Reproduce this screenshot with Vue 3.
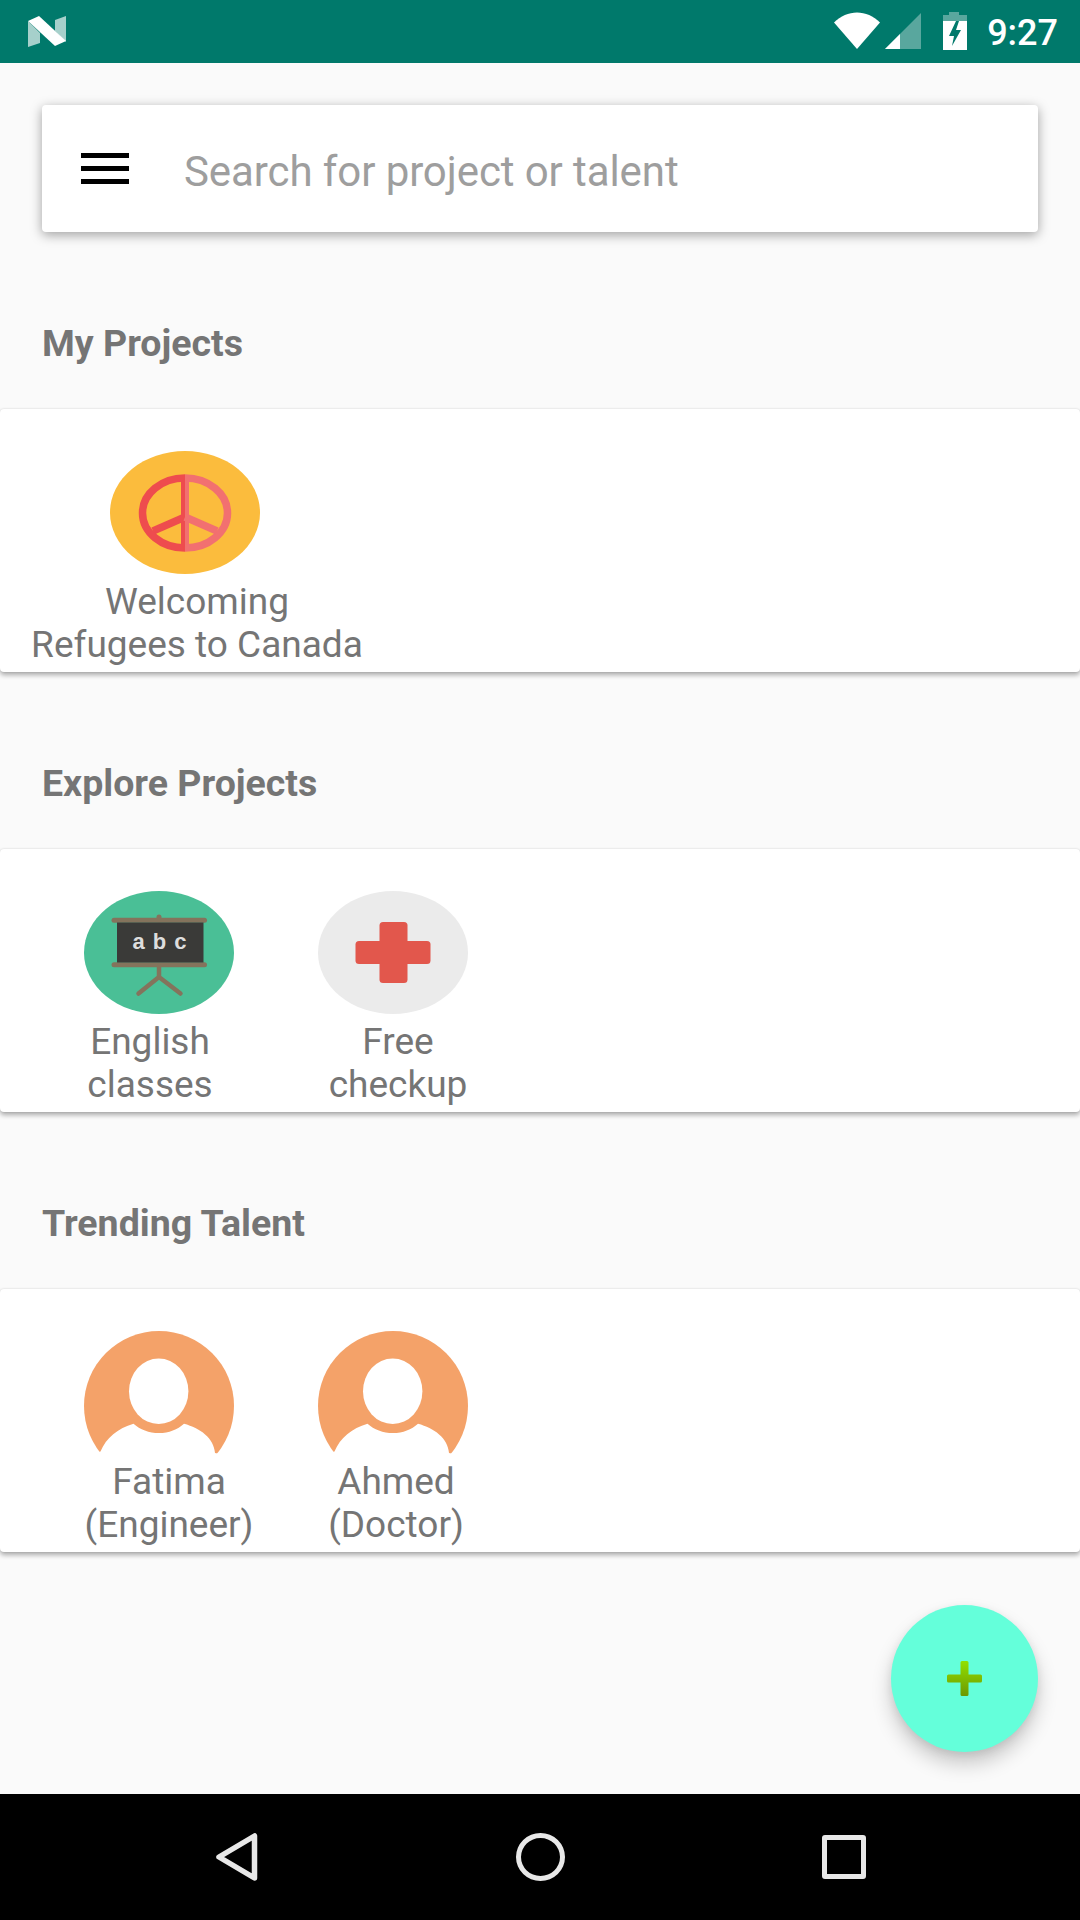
<template>
  <div class="screen">

    <!-- STATUS BAR -->
    <div class="status-bar">
      <svg class="logo" width="70" height="63" viewBox="0 0 70 63">
        <polygon points="28,21 40,33 40,43 28,47" fill="#fff" opacity="0.65" />
        <polygon points="55,20 66,16 66,42 55,31" fill="#fff" opacity="0.65" />
        <polygon points="28,21 39,16 66,41 55,46" fill="#fff" />
      </svg>
      <div class="status-right">
        <svg width="46" height="38" viewBox="0 0 46 38">
          <path d="M0 10.5 C13 -3 33 -3 46 10.5 L23 37 Z" fill="#fff" />
        </svg>
        <svg class="signal" width="36" height="38" viewBox="0 0 36 38">
          <polygon points="0,37 36,1 36,37" fill="#fff" opacity="0.35" />
          <polygon points="0,37 15,22 15,37" fill="#fff" />
        </svg>
        <svg class="battery" width="24" height="38" viewBox="0 0 24 38">
          <path d="M6 0 H16 V3 H24 V9 H0 V3 H6 Z" fill="#fff" opacity="0.35" />
          <rect x="0" y="9" width="24" height="29" fill="#fff" />
          <polygon points="13,9 6,24 11,24 9,34 18,18 13,18 16,9" fill="#00796b" />
        </svg>
        <span class="time">9:27</span>
      </div>
    </div>

    <div class="main">
      <!-- SEARCH -->
      <div class="search">
        <div class="burger"><i></i><i></i><i></i></div>
        <span class="placeholder">Search for project or talent</span>
      </div>

      <!-- SECTIONS -->
      <template v-for="section in sections" :key="section.title">
        <h2>{{ section.title }}</h2>
        <div class="card" :class="section.cls">
          <div v-for="item in section.items" :key="item.lines[0]" class="item">
            <div class="pic" :style="{ marginLeft: item.left + 'px', marginRight: item.right + 'px' }">
              <svg v-if="item.icon === 'peace'" width="150" height="123" viewBox="0 0 150 123">
                <ellipse cx="75" cy="61.5" rx="75" ry="61.5" fill="#fbbc3d" />
                <g fill="none" stroke-width="7.5">
                  <g stroke="#ee4c4e">
                    <path d="M75 27 A42.5 35 0 0 0 75 97" />
                    <path d="M75 66 L43 80" />
                    <path d="M73 25 V100" stroke-width="4" />
                  </g>
                  <g stroke="#f27070">
                    <path d="M75 27 A42.5 35 0 0 1 75 97" />
                    <path d="M75 66 L107 80" />
                    <path d="M77 25 V100" stroke-width="4" />
                  </g>
                </g>
              </svg>
              <svg v-else-if="item.icon === 'board'" width="150" height="123" viewBox="0 0 150 123">
                <ellipse cx="75" cy="61.5" rx="75" ry="61.5" fill="#4abf96" />
                <g stroke="#84735c" fill="none" stroke-linecap="round">
                  <path d="M75 26 V29" stroke-width="5" />
                  <path d="M30 29.2 H120.5" stroke-width="5" />
                  <path d="M30 73.7 H120.5" stroke-width="5" />
                  <path d="M75 75 V86 M75 86 L54.5 102.5 M75 86 L96.5 102.5" stroke-width="4.5" />
                </g>
                <rect x="33" y="31.5" width="86.5" height="40" fill="#3a3a38" />
                <text x="75.5" y="57.5" class="abc" text-anchor="middle">a b c</text>
              </svg>
              <svg v-else-if="item.icon === 'cross'" width="150" height="123" viewBox="0 0 150 123">
                <ellipse cx="75" cy="61.5" rx="75" ry="61.5" fill="#ebebeb" />
                <rect x="61.5" y="31" width="28" height="61" rx="3.5" fill="#e2574c" />
                <rect x="37.5" y="50" width="75" height="23" rx="3.5" fill="#e2574c" />
              </svg>
              <svg v-else width="150" height="123" viewBox="0 0 150 123">
                <circle cx="75" cy="75" r="75" fill="#f4a269" />
                <ellipse cx="74.7" cy="60.3" rx="29.7" ry="32.8" fill="#fff" />
                <path d="M16.5 120.5 C22 107 34 97 49.5 92.7 C56 98.5 65 102 75 102 C85 102 93.5 98.5 100 92.7 C116 97 130 107 131 122 L150 126 L0 126 Z" fill="#fff" />
              </svg>
            </div>
            <div class="label">
              <div v-for="line in item.lines" :key="line">{{ line }}</div>
            </div>
          </div>
        </div>
      </template>

      <!-- FAB -->
      <div class="fab">
        <svg width="35" height="35" viewBox="0 0 35 35">
          <defs>
            <linearGradient id="plusFill" x1="0" y1="0" x2="0" y2="1">
              <stop offset="0" stop-color="#92e000" />
              <stop offset="1" stop-color="#6c9800" />
            </linearGradient>
          </defs>
          <path d="M13.5 1.5 a1.5 1.5 0 0 1 1.5 -1.5 h5 a1.5 1.5 0 0 1 1.5 1.5 V13.5 H33.5 a1.5 1.5 0 0 1 1.5 1.5 v5 a1.5 1.5 0 0 1 -1.5 1.5 H21.5 V33.5 a1.5 1.5 0 0 1 -1.5 1.5 h-5 a1.5 1.5 0 0 1 -1.5 -1.5 V21.5 H1.5 a1.5 1.5 0 0 1 -1.5 -1.5 v-5 a1.5 1.5 0 0 1 1.5 -1.5 H13.5 Z" fill="url(#plusFill)" />
        </svg>
      </div>
    </div>

    <!-- NAV BAR -->
    <div class="nav-bar">
      <svg class="back" width="42" height="48" viewBox="0 0 42 48">
        <path d="M38.5 3 V45 L3 24 Z" fill="none" stroke="#e8e8e8" stroke-width="5.5" stroke-linejoin="round" />
      </svg>
      <div class="home"></div>
      <div class="recent"></div>
    </div>

  </div>
</template>

<script setup>
const sections = [
  {
    title: 'My Projects',
    cls: 'mine',
    items: [
      { icon: 'peace', lines: ['Welcoming', 'Refugees to Canada'], left: 0, right: 24 }
    ]
  },
  {
    title: 'Explore Projects',
    cls: 'explore',
    items: [
      { icon: 'board', lines: ['English', 'classes'], left: 18, right: 0 },
      { icon: 'cross', lines: ['Free', 'checkup'], left: 0, right: 10 }
    ]
  },
  {
    title: 'Trending Talent',
    cls: 'talent',
    items: [
      { icon: 'person', lines: ['Fatima', '(Engineer)'], left: 0, right: 20 },
      { icon: 'person', lines: ['Ahmed', '(Doctor)'], left: 0, right: 6 }
    ]
  }
]
</script>

<style scoped>
.screen {
  width: 1080px;
  height: 1920px;
  display: flex;
  flex-direction: column;
  background-color: #fafafa;
  font-family: Roboto, sans-serif;
  overflow: hidden;
}

.status-bar {
  height: 63px;
  flex-shrink: 0;
  background-color: #00796b;
  display: flex;
  justify-content: space-between;
}

.status-right {
  display: flex;
  padding: 12px 22px 0 0;
}

.signal {
  margin-left: 5px;
}

.battery {
  margin-left: 22px;
}

.time {
  margin-left: 20px;
  color: #fff;
  font-size: 36px;
  font-weight: 500;
  line-height: 42px;
}

.main {
  flex: 1;
  position: relative;
  padding-top: 42px;
}

.search {
  width: 996px;
  height: 127px;
  margin-left: 42px;
  display: flex;
  align-items: center;
  background-color: #fff;
  border-radius: 4px;
  box-shadow: 0 3px 12px rgba(0, 0, 0, 0.36);
}

.burger {
  width: 48px;
  margin-left: 39px;
  display: flex;
  flex-direction: column;
  gap: 8px;
}

.burger i {
  height: 5px;
  background-color: #000;
}

.placeholder {
  margin-left: 55px;
  padding-top: 5px;
  color: #9e9e9e;
  font-size: 42px;
  letter-spacing: -0.09px;
}

h2 {
  height: 42px;
  margin: 90px 0 45px 42px;
  color: #757575;
  font-size: 37.5px;
  font-weight: 700;
  line-height: 42px;
}

.card {
  height: 263px;
  box-sizing: border-box;
  padding-top: 42px;
  display: flex;
  background-color: #fff;
  border-radius: 4px;
  box-shadow: 0 3px 5px rgba(0, 0, 0, 0.32), 0 0 2px rgba(0, 0, 0, 0.12);
}

.mine {
  padding-left: 27px;
}

.explore {
  padding-left: 50px;
  gap: 48px;
}

.talent {
  padding-left: 69px;
  gap: 27px;
}

.item {
  width: 200px;
  display: flex;
  flex-direction: column;
  align-items: center;
}

.mine .item {
  width: 340px;
}

.pic {
  height: 123px;
}

.pic svg {
  display: block;
}

.abc {
  fill: #ddd;
  font-family: "Liberation Sans", sans-serif;
  font-size: 22px;
  font-weight: 700;
  word-spacing: 2px;
}

.label {
  margin-top: 6px;
  color: #757575;
  font-size: 37px;
  line-height: 43px;
  text-align: center;
  white-space: nowrap;
}

.fab {
  position: absolute;
  left: 891px;
  top: 1542px;
  width: 147px;
  height: 147px;
  display: flex;
  align-items: center;
  justify-content: center;
  border-radius: 50%;
  background-color: #64ffda;
  box-shadow: 0 12px 20px rgba(0, 0, 0, 0.2), 0 3px 8px rgba(0, 0, 0, 0.08);
}

.nav-bar {
  height: 126px;
  flex-shrink: 0;
  position: relative;
  background-color: #000;
  display: flex;
  align-items: center;
}

.back {
  margin-left: 216px;
}

.home {
  width: 49px;
  height: 48px;
  box-sizing: border-box;
  margin-left: 258px;
  border: 5.5px solid #e8e8e8;
  border-radius: 50%;
}

.recent {
  width: 44px;
  height: 44px;
  box-sizing: border-box;
  margin-left: 257px;
  border: 5.5px solid #e8e8e8;
  border-radius: 3px;
}
</style>

<style>
html,
body {
  background-color: #fafafa;
}
</style>
